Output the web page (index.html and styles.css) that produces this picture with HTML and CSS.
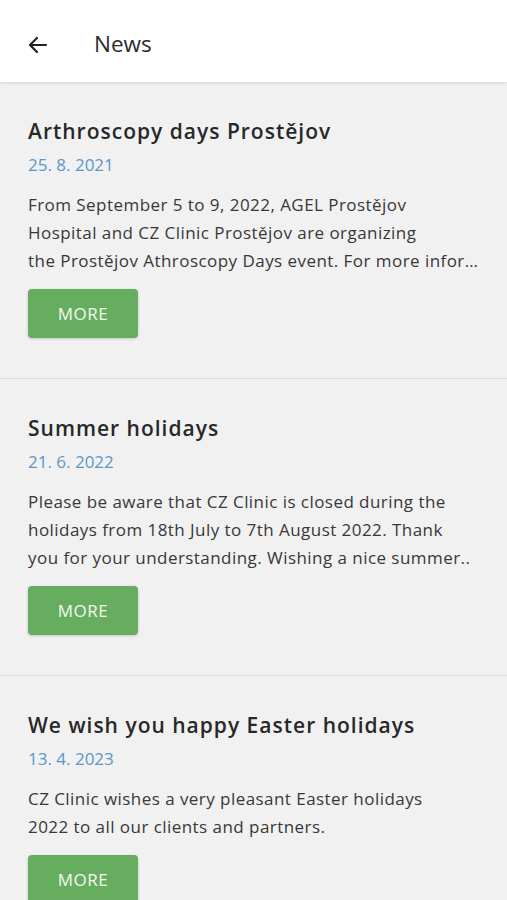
FILE: index.html
```html
<!DOCTYPE html>
<html lang="en">
<head>
<meta charset="utf-8">
<title>News</title>
<link rel="stylesheet" href="styles.css">
</head>
<body>
<header class="appbar">
  <button class="back" aria-label="Back">
    <svg width="24" height="24" viewBox="0 0 24 24" fill="none" stroke="#222" stroke-width="2.2" stroke-linecap="round" stroke-linejoin="round"><path d="M20 12H4.5"/><path d="M11 5l-7 7 7 7"/></svg>
  </button>
  <h1 class="appbar-title">News</h1>
</header>
<main class="list">
  <article class="card">
    <h2 class="card-title">Arthroscopy days Prostějov</h2>
    <div class="card-date">25. 8. 2021</div>
    <p class="card-text">
      <span class="line">From September 5 to 9, 2022, AGEL Prostějov</span>
      <span class="line">Hospital and CZ Clinic Prostějov are organizing</span>
      <span class="line">the Prostějov Athroscopy Days event. For more infor…</span>
    </p>
    <button class="more">MORE</button>
  </article>
  <article class="card">
    <h2 class="card-title">Summer holidays</h2>
    <div class="card-date">21. 6. 2022</div>
    <p class="card-text">
      <span class="line">Please be aware that CZ Clinic is closed during the</span>
      <span class="line">holidays from 18th July to 7th August 2022. Thank</span>
      <span class="line">you for your understanding. Wishing a nice summer..</span>
    </p>
    <button class="more">MORE</button>
  </article>
  <article class="card">
    <h2 class="card-title">We wish you happy Easter holidays</h2>
    <div class="card-date">13. 4. 2023</div>
    <p class="card-text">
      <span class="line">CZ Clinic wishes a very pleasant Easter holidays</span>
      <span class="line">2022 to all our clients and partners.</span>
    </p>
    <button class="more">MORE</button>
  </article>
</main>
</body>
</html>
```
FILE: styles.css
```css
* { box-sizing: border-box; }
html, body { margin: 0; padding: 0; }
body {
  background: #f1f1f1;
  font-family: "Open Sans", "Noto Sans", sans-serif;
  color: #333;
  width: 507px;
  height: 900px;
  overflow: hidden;
}
.appbar {
  height: 82px;
  background: #fff;
  display: flex;
  align-items: center;
  padding: 6px 0 0 26px;
  box-shadow: 0 1px 4px rgba(0,0,0,0.12);
  position: relative;
  z-index: 1;
}
.back {
  border: 0;
  background: none;
  padding: 0;
  width: 24px;
  height: 24px;
  display: flex;
  margin-top: 2px;
}
.appbar-title {
  margin: 0 0 0 44px;
  font-size: 22.5px;
  font-weight: 400;
  color: #2b2b2b;
  line-height: 28px;
}
.card {
  padding: 35px 28px 40px;
  border-bottom: 1px solid #dcdcdc;
}
.card-title {
  margin: 0;
  font-size: 21px;
  line-height: 28px;
  font-weight: 600;
  letter-spacing: 1px;
  color: #282828;
}
.card-date {
  margin-top: 8px;
  font-size: 17px;
  line-height: 24px;
  color: #5b97c9;
}
.card-text {
  margin: 14px 0 0;
  font-size: 17px;
  line-height: 28px;
  letter-spacing: 0.45px;
  color: #383838;
}
.line {
  display: block;
  white-space: nowrap;
  overflow: hidden;
  text-overflow: ellipsis;
}
.more {
  display: block;
  margin-top: 14px;
  width: 110px;
  height: 49px;
  border: 0;
  border-radius: 4px;
  background: #67ad60;
  color: #f2f9ef;
  font-family: inherit;
  font-size: 17px;
  letter-spacing: 0.5px;
  box-shadow: 0 1px 3px rgba(0,0,0,0.18);
}
```
